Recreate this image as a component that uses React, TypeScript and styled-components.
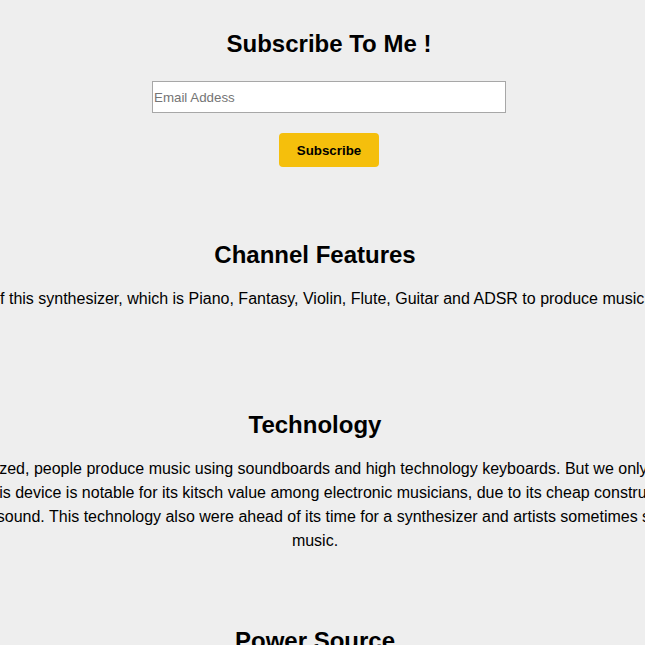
import React from "react";
import styled, { createGlobalStyle } from "styled-components";

const GlobalStyle = createGlobalStyle`
  html {
    scrollbar-width: none;
  }
  html::-webkit-scrollbar,
  body::-webkit-scrollbar {
    display: none;
  }
  body {
    margin: 0;
    background: #eeeeee;
    color: #000000;
    font-family: "Liberation Sans", Arial, sans-serif;
  }
`;

const Page = styled.main`
  display: flex;
  flex-direction: column;
  align-items: center;
  gap: 74px;
  width: 100%;
  padding: 30px 0 60px;
  overflow: hidden;
`;

const SubscribeForm = styled.form`
  display: flex;
  flex-direction: column;
  align-items: center;
  margin-left: 13px;
`;

const Heading = styled.h2`
  margin: 0;
  font-size: 24px;
  line-height: 28px;
  font-weight: bold;
  text-align: center;
`;

const EmailInput = styled.input`
  box-sizing: border-box;
  width: 354px;
  height: 32px;
  margin-top: 23px;
  padding: 1px 1px;
  border: 1px solid #a7a7a7;
  border-radius: 0;
  background: #ffffff;
  font-family: "Liberation Sans", Arial, sans-serif;
  font-size: 13.333px;
  color: #000000;
  outline: none;

  &::placeholder {
    color: #757575;
  }
`;

const SubscribeButton = styled.button`
  width: 100px;
  height: 34px;
  margin-top: 20px;
  border: none;
  border-radius: 4px;
  background: #f5bf0c;
  color: #000000;
  font-family: "Liberation Sans", Arial, sans-serif;
  font-size: 13.333px;
  font-weight: bold;
  cursor: pointer;
`;

const Feature = styled.section<{ $tail?: number }>`
  box-sizing: border-box;
  flex-shrink: 0;
  width: 908px;
  margin-right: 15px;
  padding-bottom: ${(p) => p.$tail ?? 0}px;
  text-align: center;
`;

const Text = styled.p`
  margin: 18px 0 0;
  font-size: 16px;
  line-height: 24px;
`;

const features = [
  {
    title: "Channel Features",
    tail: 26,
    text: "Use 6 sounds of this synthesizer, which is Piano, Fantasy, Violin, Flute, Guitar and ADSR to produce music in any styles.",
  },
  {
    title: "Technology",
    tail: 0,
    text: "Now music is digitized, people produce music using soundboards and high technology keyboards. But we only need one thing: the Casio VL-1. This device is notable for its kitsch value among electronic musicians, due to its cheap construction, small size, and its distinctive sound. This technology also were ahead of its time for a synthesizer and artists sometimes still use it to play music.",
  },
  {
    title: "Power Source",
    tail: 0,
    text: "The VL-Tone runs on four small batteries, so you can carry it anywhere and play wherever you are.",
  },
];

export default function App() {
  return (
    <>
      <GlobalStyle />
      <Page>
        <SubscribeForm onSubmit={(e) => e.preventDefault()}>
          <Heading>Subscribe To Me !</Heading>
          <EmailInput type="email" placeholder="Email Addess" />
          <SubscribeButton type="submit">Subscribe</SubscribeButton>
        </SubscribeForm>
        {features.map((f) => (
          <Feature key={f.title} $tail={f.tail}>
            <Heading>{f.title}</Heading>
            <Text>{f.text}</Text>
          </Feature>
        ))}
      </Page>
    </>
  );
}
